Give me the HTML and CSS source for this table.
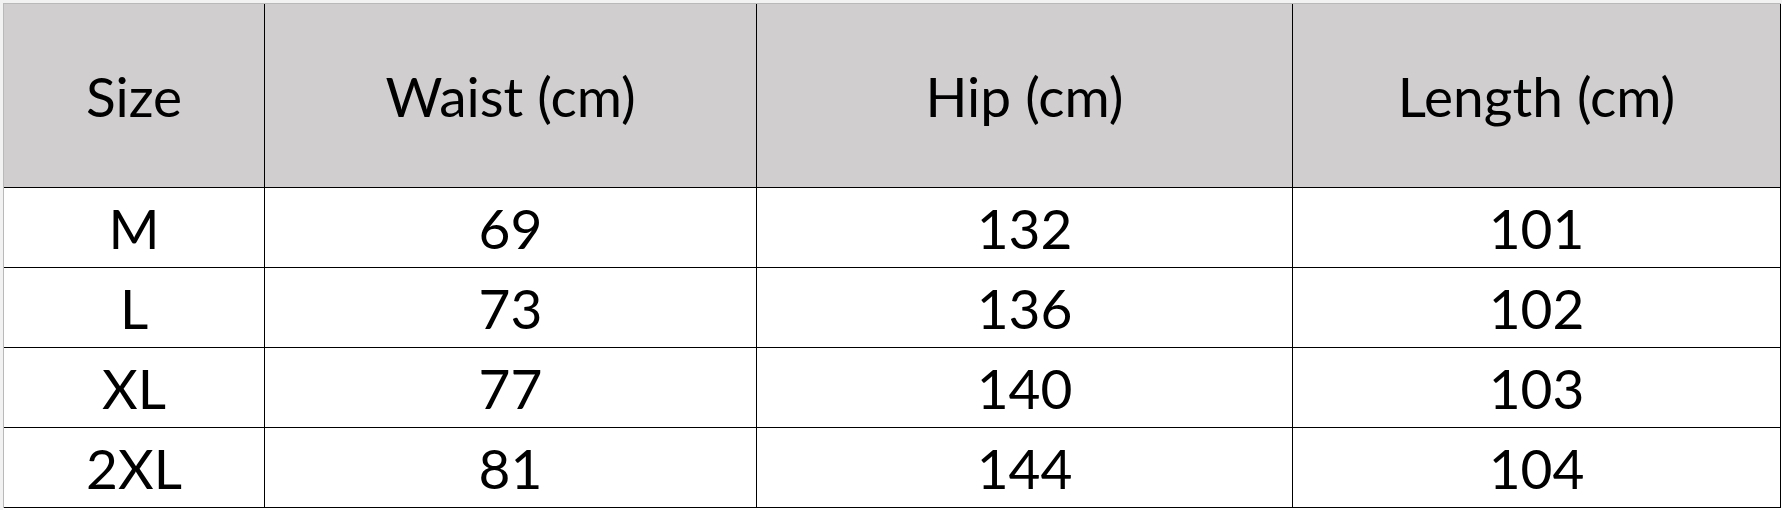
FILE: index.html
```html
<!DOCTYPE html>
<html lang="en">
<head>
<meta charset="utf-8">
<title>Size chart</title>
<link rel="stylesheet" href="styles.css">
</head>
<body>
<div class="sheet">
  <div class="chart">
    <div class="cell head">Size</div>
    <div class="cell head">Waist (cm)</div>
    <div class="cell head">Hip (cm)</div>
    <div class="cell head">Length (cm)</div>

    <div class="cell">M</div>
    <div class="cell">69</div>
    <div class="cell">132</div>
    <div class="cell">101</div>

    <div class="cell">L</div>
    <div class="cell">73</div>
    <div class="cell">136</div>
    <div class="cell">102</div>

    <div class="cell">XL</div>
    <div class="cell">77</div>
    <div class="cell">140</div>
    <div class="cell">103</div>

    <div class="cell">2XL</div>
    <div class="cell">81</div>
    <div class="cell">144</div>
    <div class="cell">104</div>
  </div>
</div>
</body>
</html>
```
FILE: styles.css
```css
html, body {
  margin: 0;
  padding: 0;
  background: #ffffff;
}

.sheet {
  padding: 3px 0 0 3px;
  background: #f3f3f3;
  width: 1782px;
  height: 510px;
  box-sizing: border-box;
  background: linear-gradient(#ffffff, #ffffff) no-repeat 3px 3px / 1779px 507px, #f2f2f2;
}

.chart {
  display: grid;
  grid-template-columns: 261px 492px 536px 488px;
  grid-template-rows: 184px 80px 80px 80px 80px;
  border-top: 1px solid #b9b9b9;
  border-left: 1px solid #b9b9b9;
  width: max-content;
  font-family: Lato, "Open Sans", "Liberation Sans", sans-serif;
  font-size: 55px;
  color: #000;
}

.cell {
  display: flex;
  align-items: center;
  justify-content: center;
  box-sizing: border-box;
  border-right: 1px solid #000;
  border-bottom: 1px solid #000;
  background: #ffffff;
  white-space: nowrap;
}

.cell.head {
  background: #d0cece;
}
```
